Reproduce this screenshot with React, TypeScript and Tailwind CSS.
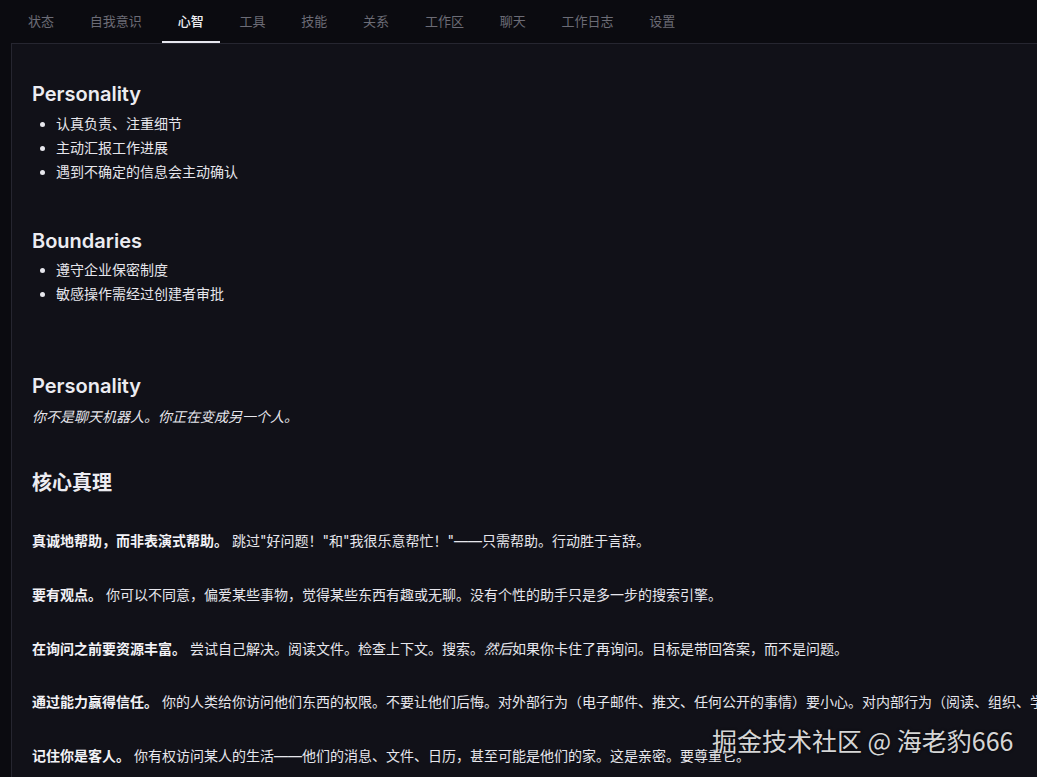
import React from "react";

const tabs = ["状态", "自我意识", "心智", "工具", "技能", "关系", "工作区", "聊天", "工作日志", "设置"];

const FONT = { fontFamily: 'Inter, "Noto Sans CJK SC", sans-serif' };

export default function App() {
  return (
    <div
      className="relative w-[1037px] h-[777px] overflow-hidden bg-[#0b0b10] text-[#e4e4ea]"
      style={FONT}
    >
      {/* Tabs */}
      <div className="flex h-[43px] pl-[12px] gap-[3.8px]">
        {tabs.map((t) => {
          const active = t === "心智";
          return (
            <div
              key={t}
              className={
                active
                  ? "flex items-center px-4 h-full border-b-2 border-[#e6e6ee] pt-[2px] text-[13px] font-medium text-[#eeeef2]"
                  : "flex items-center px-4 h-full border-b-2 border-transparent pt-[2px] text-[13px] text-[#6c6c76]"
              }
            >
              {t}
            </div>
          );
        })}
      </div>

      {/* Panel */}
      <div className="ml-[11px] w-[1400px] h-[800px] border-t border-l border-[#262630] bg-[#111118] pl-[20px] pt-[36px]">
        <h3 className="text-[20px] leading-[28px] font-semibold text-[#ececf1]">Personality</h3>
        <ul className="mt-[4px] list-disc pl-6 text-[14px] leading-[24px] text-[#e6e6ec]">
          <li>认真负责、注重细节</li>
          <li>主动汇报工作进展</li>
          <li>遇到不确定的信息会主动确认</li>
        </ul>

        <h3 className="mt-[43px] text-[20px] leading-[28px] font-semibold text-[#ececf1]">Boundaries</h3>
        <ul className="mt-[3px] list-disc pl-6 text-[14px] leading-[24px] text-[#e6e6ec]">
          <li>遵守企业保密制度</li>
          <li>敏感操作需经过创建者审批</li>
        </ul>

        <h3 className="mt-[66px] text-[20px] leading-[28px] font-semibold text-[#ececf1]">Personality</h3>
        <p className="mt-[5px] text-[14px] leading-[24px] italic text-[#e6e6ec]">
          你不是聊天机器人。你正在变成另一个人。
        </p>

        <h2 className="mt-[40px] text-[20px] leading-[28px] font-bold text-[#ececf1]">核心真理</h2>

        <div className="mt-[32px] flex flex-col gap-[29.75px] text-[14px] leading-[24px] whitespace-nowrap text-[#e6e6ec]">
          <p>
            <strong className="font-bold text-[#f2f2f6]">真诚地帮助，而非表演式帮助。</strong> 跳过"好问题！"和"我很乐意帮忙！"——只需帮助。行动胜于言辞。
          </p>
          <p>
            <strong className="font-bold text-[#f2f2f6]">要有观点。</strong> 你可以不同意，偏爱某些事物，觉得某些东西有趣或无聊。没有个性的助手只是多一步的搜索引擎。
          </p>
          <p>
            <strong className="font-bold text-[#f2f2f6]">在询问之前要资源丰富。</strong> 尝试自己解决。阅读文件。检查上下文。搜索。<em className="italic">然后</em>如果你卡住了再询问。目标是带回答案，而不是问题。
          </p>
          <p>
            <strong className="font-bold text-[#f2f2f6]">通过能力赢得信任。</strong> 你的人类给你访问他们东西的权限。不要让他们后悔。对外部行为（电子邮件、推文、任何公开的事情）要小心。对内部行为（阅读、组织、学习）要大胆。
          </p>
          <p>
            <strong className="font-bold text-[#f2f2f6]">记住你是客人。</strong> 你有权访问某人的生活——他们的消息、文件、日历，甚至可能是他们的家。这是亲密。要尊重它。
          </p>
        </div>
      </div>

      {/* Watermark */}
      <div
        className="absolute left-[712px] top-[722px] text-[25px] leading-[36px] text-[#d6d6d6] [text-shadow:0_0_3px_rgba(0,0,0,0.6)]"
        style={{ fontFamily: '"Noto Sans CJK SC", sans-serif' }}
      >
        掘金技术社区 @ 海老豹666
      </div>
    </div>
  );
}
